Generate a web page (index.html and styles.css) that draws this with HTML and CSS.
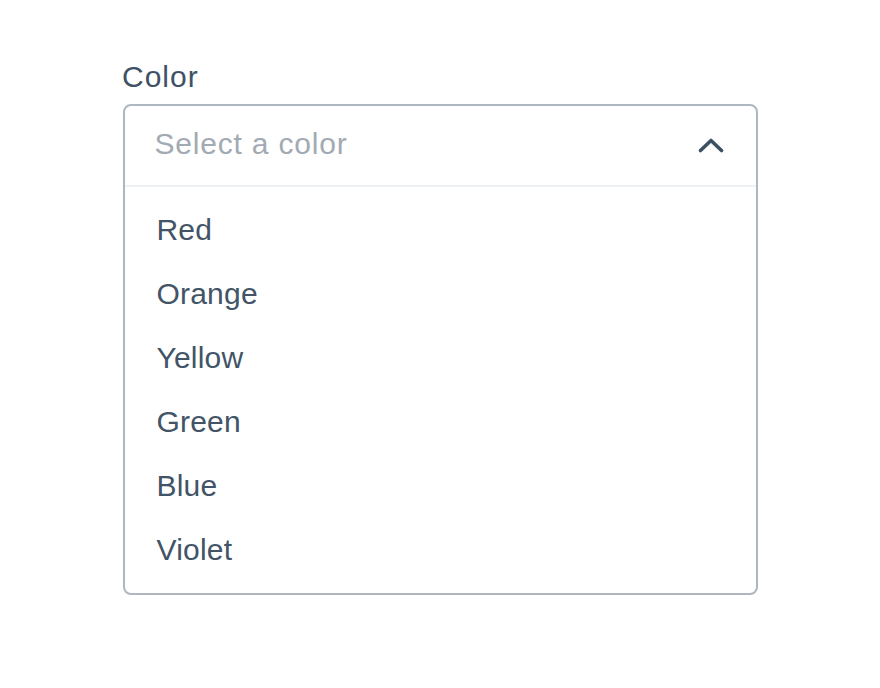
FILE: index.html
```html
<!DOCTYPE html>
<html>
<head>
<meta charset="utf-8">
<link rel="stylesheet" href="styles.css">
</head>
<body>
<div class="page">
  <div class="field">
    <div class="label">Color</div>
    <div class="select">
      <div class="select-head">
        <span class="placeholder">Select a color</span>
        <svg class="chevron" width="26" height="16" viewBox="0 0 26 16"><path d="M2.5 13.5 L13 3.5 L23.5 13.5" fill="none" stroke="#3d4f63" stroke-width="3.6" stroke-linecap="round" stroke-linejoin="round"/></svg>
      </div>
      <ul class="options">
        <li>Red</li>
        <li>Orange</li>
        <li>Yellow</li>
        <li>Green</li>
        <li>Blue</li>
        <li>Violet</li>
      </ul>
    </div>
  </div>
</div>
</body>
</html>
```

FILE: styles.css
```css
html, body {
  margin: 0;
  padding: 0;
  background: #ffffff;
}
body {
  font-family: "Liberation Sans", Arial, sans-serif;
  color: #425466;
}
.page {
  padding: 60px 0 0 122px;
}
.field {
  width: 636px;
}
.label {
  font-size: 30px;
  letter-spacing: 1px;
  line-height: 34px;
  color: #3f5164;
  margin-bottom: 10px;
}
.select {
  border: 2px solid #aeb7c0;
  border-radius: 8px;
  margin-left: 0.5px;
  width: 631px;
}
.select-head {
  display: flex;
  align-items: center;
  justify-content: space-between;
  height: 79px;
  padding: 0 32px 0 30px;
  border-bottom: 2px solid #eef1f3;
}
.placeholder {
  font-size: 30px;
  letter-spacing: 0.8px;
  color: #a2aab3;
  margin-top: -3px;
}
.chevron {
  display: block;
  margin-top: -1px;
}
.options {
  list-style: none;
  margin: 0;
  padding: 11px 0 11px 0;
}
.options li {
  height: 64px;
  line-height: 64px;
  font-size: 30px;
  letter-spacing: 0.2px;
  padding-left: 32px;
  color: #425466;
}
```
